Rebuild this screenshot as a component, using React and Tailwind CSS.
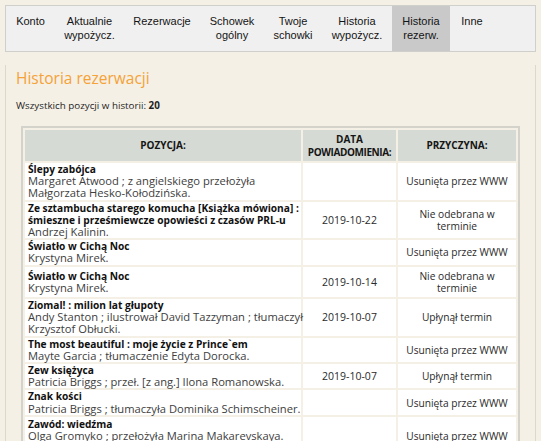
import React from "react";

const tabs = [
  { label: ["Konto"], w: "w-[49px]" },
  { label: ["Aktualnie", "wypożycz."], w: "w-[69px]" },
  { label: ["Rezerwacje"], w: "w-[76px]" },
  { label: ["Schowek", "ogólny"], w: "w-[64px]" },
  { label: ["Twoje", "schowki"], w: "w-[58px]" },
  { label: ["Historia", "wypożycz."], w: "w-[70px]" },
  { label: ["Historia", "rezerw."], w: "w-[58px]", active: true },
  { label: ["Inne"], w: "w-[44px]" },
];

const rows = [
  {
    title: ["Ślepy zabójca"],
    authors: ["Margaret Atwood ; z angielskiego przełożyła", "Małgorzata Hesko-Kołodzińska."],
    date: "",
    reason: ["Usunięta przez WWW"],
  },
  {
    title: ["Ze sztambucha starego komucha [Książka mówiona] :", "śmieszne i prześmiewcze opowieści z czasów PRL-u"],
    authors: ["Andrzej Kalinin."],
    date: "2019-10-22",
    reason: ["Nie odebrana w", "terminie"],
  },
  {
    title: ["Światło w Cichą Noc"],
    authors: ["Krystyna Mirek."],
    date: "",
    reason: ["Usunięta przez WWW"],
  },
  {
    title: ["Światło w Cichą Noc"],
    authors: ["Krystyna Mirek."],
    date: "2019-10-14",
    reason: ["Nie odebrana w", "terminie"],
  },
  {
    title: ["Ziomal! : milion lat głupoty"],
    authors: ["Andy Stanton ; ilustrował David Tazzyman ; tłumaczył", "Krzysztof Obłucki."],
    date: "2019-10-07",
    reason: ["Upłynął termin"],
  },
  {
    title: ["The most beautiful : moje życie z Prince`em"],
    authors: ["Mayte Garcia ; tłumaczenie Edyta Dorocka."],
    date: "",
    reason: ["Usunięta przez WWW"],
  },
  {
    title: ["Zew księżyca"],
    authors: ["Patricia Briggs ; przeł. [z ang.] Ilona Romanowska."],
    date: "2019-10-07",
    reason: ["Upłynął termin"],
  },
  {
    title: ["Znak kości"],
    authors: ["Patricia Briggs ; tłumaczyła Dominika Schimscheiner."],
    date: "",
    reason: ["Usunięta przez WWW"],
  },
  {
    title: ["Zawód: wiedźma"],
    authors: ["Olga Gromyko ; przełożyła Marina Makarevskaya."],
    date: "",
    reason: ["Usunięta przez WWW"],
    tall: true,
  },
];

function Lines({ items, className = "" }) {
  return items.map((t, i) => (
    <span key={i} className={"block whitespace-nowrap " + className}>
      {t}
    </span>
  ));
}

export default function App() {
  return (
    <div className="min-h-[441px] w-[541px] bg-[#f4f0e6] px-[5px] pt-[5px] pb-[20px] font-['Open_Sans',sans-serif]">
      {/* top navigation */}
      <nav className="flex h-[47px] w-[531px] border border-[#cfcfcb] bg-[#f0f0f0] font-['Liberation_Sans',Arial,sans-serif] text-[11px] leading-[14px] text-[#141414]">
        {tabs.map((t, i) => (
          <div
            key={i}
            className={
              "pt-[8px] text-center " + t.w + (t.active ? " bg-[#c9c9c9]" : "")
            }
          >
            {t.label.map((l, j) => (
              <div key={j}>{l}</div>
            ))}
          </div>
        ))}
      </nav>

      {/* content panel */}
      <div className="mt-[13px] min-h-[380px] w-[531px] border-l border-r border-[#ddd8cc] px-[10px] pt-[2px]">
        <h1 className="text-[15.5px] leading-[22px] text-[#f5a236]">Historia rezerwacji</h1>
        <p className="mt-[10px] text-[9.8px] leading-[14px] text-[#1e1e1e]">
          Wszystkich pozycji w historii: <b>20</b>
        </p>

        <table className="mt-[13px] ml-[5px] w-[499px] table-fixed border-separate border-spacing-[2px] border-2 border-[#d3d3cc] text-[10.5px] leading-[12.2px]">
          <thead>
            <tr>
              <th className="h-[31px] w-[276px] bg-[#d5dad4] text-center align-middle text-[10px] leading-[13px] font-bold text-[#151515]">
                POZYCJA:
              </th>
              <th className="h-[31px] w-[93px] bg-[#d5dad4] text-center align-middle text-[10px] leading-[13px] font-bold text-[#151515]">
                DATA
                <br />
                <span className="tracking-[-0.4px]">POWIADOMIENIA:</span>
              </th>
              <th className="h-[31px] w-[118px] bg-[#d5dad4] text-center align-middle text-[10px] leading-[13px] font-bold text-[#151515]">
                PRZYCZYNA:
              </th>
            </tr>
          </thead>
          <tbody>
            {rows.map((r, i) => (
              <tr key={i}>
                <td
                  className={
                    "bg-white px-[3px] " +
                    (r.tall ? "h-[38px] align-top pt-[1px]" : "align-middle")
                  }
                >
                  <Lines items={r.title} className="text-[10.2px] font-bold text-[#111]" />
                  <Lines items={r.authors} className="text-[11.2px] text-[#404040]" />
                </td>
                <td className="bg-white text-center align-middle text-[#2a2a2a]">{r.date}</td>
                <td className="bg-white py-[3px] text-center align-middle text-[10.2px] text-[#2a2a2a]">
                  <Lines items={r.reason} />
                </td>
              </tr>
            ))}
          </tbody>
        </table>
      </div>
    </div>
  );
}
